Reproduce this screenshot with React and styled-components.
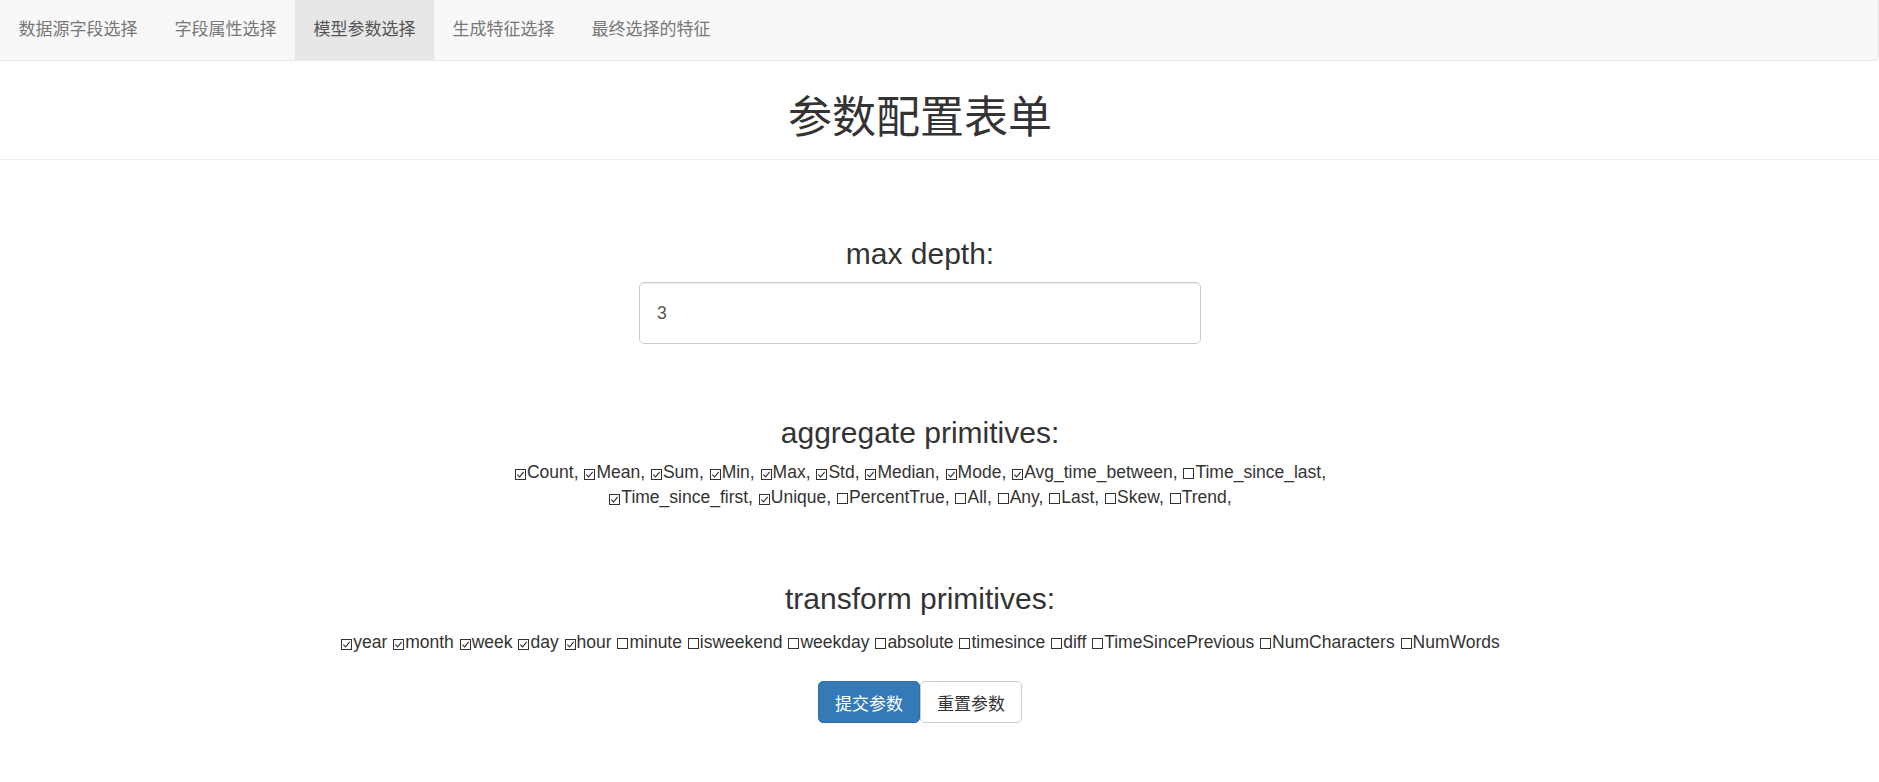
import React from 'react';
import styled, { createGlobalStyle } from 'styled-components';

const navItems = ['数据源字段选择', '字段属性选择', '模型参数选择', '生成特征选择', '最终选择的特征'];

const aggregates = [
  ['Count', true], ['Mean', true], ['Sum', true], ['Min', true], ['Max', true],
  ['Std', true], ['Median', true], ['Mode', true], ['Avg_time_between', true],
  ['Time_since_last', false], ['Time_since_first', true], ['Unique', true],
  ['PercentTrue', false], ['All', false], ['Any', false], ['Last', false],
  ['Skew', false], ['Trend', false],
];

const transforms = [
  ['year', true], ['month', true], ['week', true], ['day', true], ['hour', true],
  ['minute', false], ['isweekend', false], ['weekday', false], ['absolute', false],
  ['timesince', false], ['diff', false], ['TimeSincePrevious', false],
  ['NumCharacters', false], ['NumWords', false],
];

const GlobalStyle = createGlobalStyle`
  html, body {
    margin: 0;
    padding: 0;
    background: #fff;
  }
  body {
    font-family: "Liberation Sans", "Noto Sans CJK SC", sans-serif;
    font-size: 17.5px;
    line-height: 1.42857;
    color: #333;
  }
`;

const Check = ({ on }) => (
  <Box>
    {on && (
      <svg width="9" height="9" viewBox="0 0 9 9">
        <polyline points="1.3,4.6 3.6,6.9 7.7,1.8" fill="none" stroke="#333" strokeWidth="1.1" />
      </svg>
    )}
  </Box>
);

const App = () => {
  return (
    <Page>
      <GlobalStyle />
      <Navbar>
        {navItems.map((item, i) => (
          <NavLink key={i} active={i === 2}>{item}</NavLink>
        ))}
      </Navbar>
      <PageHeader>
        <Title>参数配置表单</Title>
      </PageHeader>
      <Form>
        <Label>max depth:</Label>
        <Input defaultValue="3" />

        <Label top={72}>aggregate primitives:</Label>
        <Options narrow>
          {aggregates.map(([name, on]) => (
            <React.Fragment key={name}>
              <Item><Check on={on} />{name},</Item>{' '}
            </React.Fragment>
          ))}
        </Options>

        <Label top={72}>transform primitives:</Label>
        <Options gap={14}>
          {transforms.map(([name, on]) => (
            <React.Fragment key={name}>
              <Item><Check on={on} />{name}</Item>{' '}
            </React.Fragment>
          ))}
        </Options>

        <Buttons>
          <Button primary>提交参数</Button>
          <Button>重置参数</Button>
        </Buttons>
      </Form>
    </Page>
  );
};

export default App;

const Page = styled.div`
  min-height: 782px;
  background: #fff;
`;

const Navbar = styled.nav`
  display: flex;
  height: 60px;
  background-color: #f8f8f8;
  border-bottom: 1px solid #e7e7e7;
  border-right: 1px solid #e7e7e7;
  border-bottom-right-radius: 5px;
  font-family: "Noto Sans CJK SC", sans-serif;
`;

const NavLink = styled.a`
  display: block;
  padding: 0 18.5px;
  line-height: 55px;
  font-size: 17px;
  color: ${p => (p.active ? '#555' : '#777')};
  background-color: ${p => (p.active ? '#e7e7e7' : 'transparent')};
  cursor: pointer;
`;

const PageHeader = styled.div`
  padding: 28px 39px 20px 0;
  border-bottom: 1px solid #eee;
  text-align: center;
`;

const Title = styled.h1`
  margin: 0;
  font-family: "Noto Sans CJK SC", sans-serif;
  font-size: 44px;
  font-weight: 400;
  line-height: 50px;
  color: #333;
`;

const Form = styled.div`
  display: flex;
  flex-direction: column;
  align-items: center;
  padding: 0 39px 0 0;
`;

const Label = styled.h3`
  margin: ${p => p.top || 77}px 0 0;
  font-size: 30px;
  font-weight: 400;
  line-height: 34px;
  color: #333;
`;

const Input = styled.input`
  box-sizing: border-box;
  width: 562px;
  height: 62px;
  margin-top: 11px;
  padding: 0 17px;
  border: 1px solid #ccc;
  border-radius: 5px;
  box-shadow: inset 0 1px 1px rgba(0, 0, 0, 0.075);
  font-family: "Liberation Sans", sans-serif;
  font-size: 17.5px;
  color: #555;
  outline: none;
`;

const Options = styled.div`
  max-width: ${p => (p.narrow ? '900px' : '1400px')};
  margin-top: ${p => p.gap || 10}px;
  text-align: center;
  font-size: 17.5px;
  line-height: 25px;
`;

const Item = styled.span`
  white-space: nowrap;
`;

const Box = styled.span`
  display: inline-flex;
  align-items: center;
  justify-content: center;
  box-sizing: border-box;
  width: 11px;
  height: 11px;
  margin: 0 1px 0 1px;
  border: 1px solid #333;
  vertical-align: -1px;
`;

const Buttons = styled.div`
  display: flex;
  margin-top: 26px;
`;

const Button = styled.button`
  box-sizing: border-box;
  width: 102px;
  height: 42px;
  padding: 0;
  border: 1px solid ${p => (p.primary ? '#2e6da4' : '#ccc')};
  border-radius: 5px;
  background-color: ${p => (p.primary ? '#337ab7' : '#fff')};
  color: ${p => (p.primary ? '#fff' : '#333')};
  font-family: "Noto Sans CJK SC", sans-serif;
  font-size: 17px;
  cursor: pointer;
`;
